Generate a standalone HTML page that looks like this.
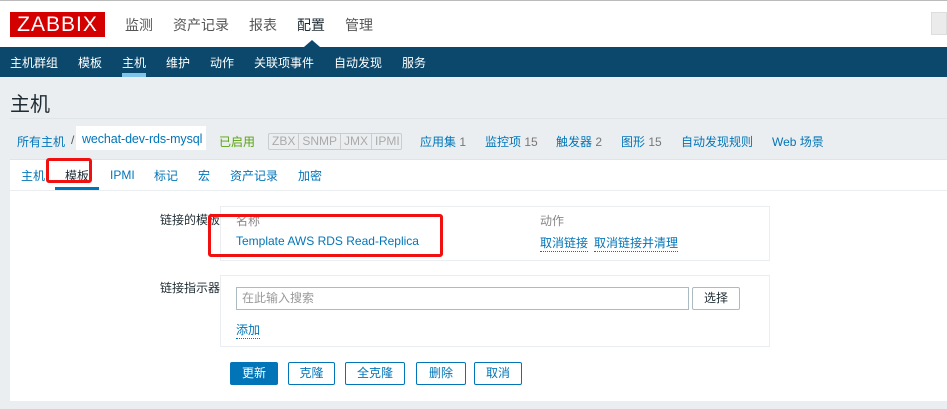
<!DOCTYPE html>
<html><head><meta charset="utf-8"><style>
*{margin:0;padding:0;box-sizing:border-box}
body{width:947px;height:409px;overflow:hidden;background:#ebeef0;font-family:"Liberation Sans","Noto Sans CJK SC",sans-serif;font-size:12px;color:#1f2c33;position:relative}
.a{position:absolute;white-space:nowrap}
.lk{color:#0275b8}
.dl{border-bottom:1px dotted #0275b8}
.btn{position:absolute;height:23px;border:1px solid #0275b8;border-radius:2px;background:#fff;color:#0275b8;text-align:center;line-height:21px;font-size:12px}
</style></head><body>
<div class="a" style="left:0;top:0;width:947px;height:47px;background:#fff;border-top:1px solid #bbb"></div>
<div class="a" style="left:10px;top:12px;width:95px;height:25px;background:#d40000;color:#fff;font-size:21px;line-height:25px;text-align:center;letter-spacing:1px">ZABBIX</div>
<div class="a" style="left:125px;top:15px;font-size:14px;color:#555">监测</div>
<div class="a" style="left:173px;top:15px;font-size:14px;color:#555">资产记录</div>
<div class="a" style="left:249px;top:15px;font-size:14px;color:#555">报表</div>
<div class="a" style="left:297px;top:15px;font-size:14px;color:#1f2c33">配置</div>
<div class="a" style="left:345px;top:15px;font-size:14px;color:#555">管理</div>
<div class="a" style="left:931px;top:12px;width:16px;height:23px;background:#ebebeb;border:1px solid #ddd"></div>
<div class="a" style="left:0;top:47px;width:947px;height:30px;background:#0b486b"></div>
<div class="a" style="left:304px;top:40px;width:0;height:0;border-left:8px solid transparent;border-right:8px solid transparent;border-bottom:7px solid #0b486b"></div>
<div class="a" style="top:54px;left:10px;color:#fff;font-size:12px">主机群组</div>
<div class="a" style="top:54px;left:78px;color:#fff">模板</div>
<div class="a" style="top:54px;left:122px;color:#fff">主机</div>
<div class="a" style="left:122px;top:73px;width:24px;height:4px;background:#7ec4ea"></div>
<div class="a" style="top:54px;left:166px;color:#fff">维护</div>
<div class="a" style="top:54px;left:210px;color:#fff">动作</div>
<div class="a" style="top:54px;left:254px;color:#fff">关联项事件</div>
<div class="a" style="top:54px;left:334px;color:#fff">自动发现</div>
<div class="a" style="top:54px;left:402px;color:#fff">服务</div>
<div class="a" style="left:10px;top:88px;font-size:20px;color:#1f2c33">主机</div>
<div class="a" style="left:10px;top:118px;width:937px;height:1px;background:#dfe4e7"></div>
<div class="a lk" style="left:17px;top:133px">所有主机</div>
<div class="a" style="left:71px;top:133px;color:#555">/</div>
<div class="a" style="left:76px;top:126px;width:130px;height:24px;background:#fff"></div>
<div class="a lk" style="left:82px;top:132px;font-size:12.5px;letter-spacing:-0.1px">wechat-dev-rds-mysql</div>
<div class="a" style="left:219px;top:133px;color:#59a30f">已启用</div>
<div class="a" style="left:268px;top:133px;width:134px;height:17px;border:1px solid #ccc;border-radius:2px;background:#ebeef0;color:#aaa;font-size:12px;line-height:15px;display:flex">
<span style="padding:0 3px;border-right:1px solid #ccc">ZBX</span><span style="padding:0 3px;border-right:1px solid #ccc">SNMP</span><span style="padding:0 3px;border-right:1px solid #ccc">JMX</span><span style="padding:0 3px">IPMI</span></div>
<div class="a lk" style="left:420px;top:133px">应用集 <span style="color:#777">1</span></div>
<div class="a lk" style="left:485px;top:133px">监控项 <span style="color:#777">15</span></div>
<div class="a lk" style="left:556px;top:133px">触发器 <span style="color:#777">2</span></div>
<div class="a lk" style="left:621px;top:133px">图形 <span style="color:#777">15</span></div>
<div class="a lk" style="left:681px;top:133px">自动发现规则</div>
<div class="a lk" style="left:772px;top:133px">Web 场景</div>
<div class="a" style="left:10px;top:159px;width:937px;height:242px;background:#fff;border-top:1px solid #dfe4e7"></div>
<div class="a" style="left:10px;top:190px;width:937px;height:1px;background:#ebeef0"></div>
<div class="a lk" style="left:21px;top:167px">主机</div>
<div class="a" style="left:65px;top:167px">模板</div>
<div class="a" style="left:55px;top:187px;width:44px;height:3px;background:#0275b8"></div>
<div class="a lk" style="left:110px;top:168px">IPMI</div>
<div class="a lk" style="left:154px;top:167px">标记</div>
<div class="a lk" style="left:198px;top:167px">宏</div>
<div class="a lk" style="left:230px;top:167px">资产记录</div>
<div class="a lk" style="left:298px;top:167px">加密</div>
<div class="a" style="left:46px;top:158px;width:46px;height:25px;border:3px solid #f01010;border-radius:3px"></div>
<div class="a" style="left:160px;top:211px">链接的模板</div>
<div class="a" style="left:220px;top:206px;width:550px;height:55px;border:1px solid #ebeef0"></div>
<div class="a" style="left:236px;top:212px;color:#888">名称</div>
<div class="a lk" style="left:236px;top:234px">Template AWS RDS Read-Replica</div>
<div class="a" style="left:540px;top:212px;color:#888">动作</div>
<div class="a lk dl" style="left:540px;top:234px">取消链接</div>
<div class="a lk dl" style="left:594px;top:234px">取消链接并清理</div>
<div class="a" style="left:208px;top:214px;width:235px;height:43px;border:3px solid #f01010;border-radius:3px"></div>
<div class="a" style="left:160px;top:279px">链接指示器</div>
<div class="a" style="left:220px;top:275px;width:550px;height:72px;border:1px solid #ebeef0"></div>
<div class="a" style="left:236px;top:287px;width:453px;height:23px;border:1px solid #acbbc2;color:#999;padding-left:5px;line-height:21px">在此输入搜索</div>
<div class="btn" style="left:692px;top:287px;width:48px;color:#1f2c33;border-color:#acbbc2">选择</div>
<div class="a lk dl" style="left:236px;top:321px">添加</div>
<div class="btn" style="left:230px;top:362px;width:48px;background:#0275b8;color:#fff">更新</div>
<div class="btn" style="left:288px;top:362px;width:47px">克隆</div>
<div class="btn" style="left:345px;top:362px;width:60px">全克隆</div>
<div class="btn" style="left:416px;top:362px;width:50px">删除</div>
<div class="btn" style="left:474px;top:362px;width:48px">取消</div>
</body></html>
